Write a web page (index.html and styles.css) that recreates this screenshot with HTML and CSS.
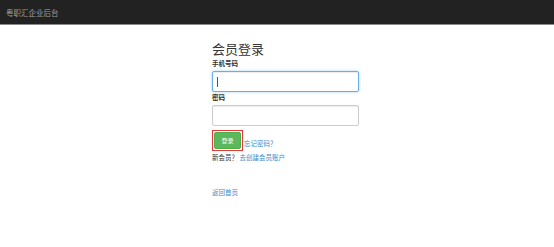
FILE: index.html
```html
<!DOCTYPE html>
<html lang="zh-CN">
<head>
    <meta charset="UTF-8">
    <title>粤职汇企业后台</title>
    <link rel="stylesheet" href="styles.css">
</head>
<body>
    <div class="navbar">
        <span class="brand">粤职汇企业后台</span>
    </div>

    <div class="login">
        <h3 class="title">会员登录</h3>
        <label class="field-label">手机号码</label>
        <div class="input focused"><span class="caret"></span></div>
        <label class="field-label">密码</label>
        <div class="input"></div>
        <div class="actions">
            <span class="btn-wrap"><button class="btn">登录</button></span>
            <a class="link" href="#">忘记密码？</a>
        </div>
        <p class="register">新会员？ <a class="link" href="#">去创建会员账户</a></p>
        <a class="link home" href="#">返回首页</a>
    </div>
</body>
</html>
```
FILE: styles.css
```css
body {
    margin: 0;
    font-family: "Noto Sans CJK SC", "Liberation Sans", sans-serif;
    background: #fff;
    color: #333;
}
.navbar {
    height: 24px;
    background: #222;
    border-bottom: 1px solid #8a8a8a;
    display: flex;
    align-items: center;
    padding-left: 6px;
}
.brand {
    color: #9d9d9d;
    font-size: 7.5px;
}
.login {
    margin-left: 212px;
    width: 147px;
    padding-top: 15px;
}
.title {
    margin: 0 0 1px;
    font-size: 13px;
    font-weight: 400;
    line-height: 18px;
}
.field-label {
    display: block;
    font-size: 6.5px;
    font-weight: 700;
    line-height: 9px;
    margin-top: 1px;
}
.input {
    box-sizing: border-box;
    height: 21px;
    border: 1px solid #ccc;
    border-radius: 2px;
    margin-top: 3px;
    padding: 5px 4px;
    box-shadow: inset 0 1px 1px rgba(0, 0, 0, 0.075);
}
.input.focused {
    border-color: #66afe9;
    box-shadow: inset 0 1px 1px rgba(0, 0, 0, 0.075), 0 0 3px rgba(102, 175, 233, 0.6);
}
.caret {
    display: block;
    width: 1px;
    height: 10px;
    background: #555;
}
.actions {
    display: flex;
    align-items: center;
    margin-top: 4px;
}
.btn-wrap {
    border: 1px solid #e53935;
    padding: 1px;
    display: flex;
}
.btn {
    width: 27px;
    height: 17px;
    padding: 0;
    border: 1px solid #4cae4c;
    border-radius: 2px;
    background: #5cb85c;
    color: #fff;
    font-family: inherit;
    font-size: 6px;
}
.link {
    color: #428bca;
    text-decoration: none;
    font-size: 6.5px;
}
.actions .link {
    margin-left: 1px;
    margin-top: 4px;
}
.register {
    margin: 1px 0 0;
    font-size: 6.5px;
    line-height: 10px;
}
.home {
    display: block;
    line-height: 10px;
    margin-top: 25px;
}
```
